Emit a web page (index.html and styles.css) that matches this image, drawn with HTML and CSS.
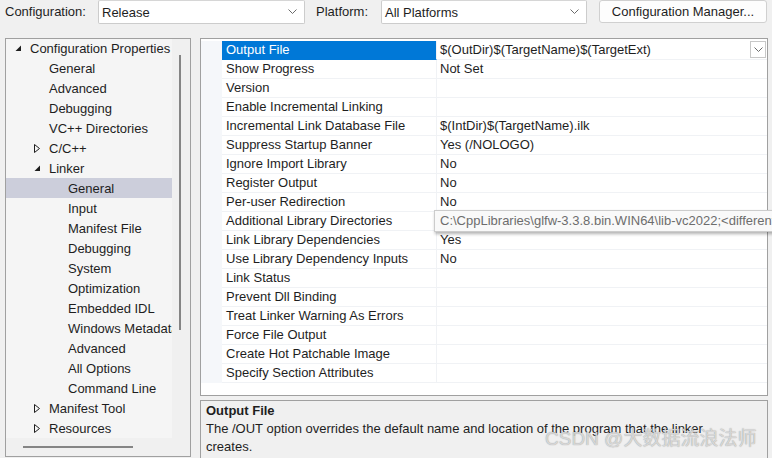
FILE: index.html
```html
<!DOCTYPE html>
<html>
<head>
<meta charset="utf-8">
<link rel="stylesheet" href="styles.css">
</head>
<body>
<div class="top">
  <span class="lbl lbl1">Configuration:</span>
  <div class="combo combo1"><span>Release</span><svg class="chev" width="9" height="6" viewBox="0 0 9 6"><polyline points="0.5,0.5 4.5,4.5 8.5,0.5" fill="none" stroke="#6b6b6b" stroke-width="1"/></svg></div>
  <span class="lbl lbl2">Platform:</span>
  <div class="combo combo2"><span>All Platforms</span><svg class="chev" width="9" height="6" viewBox="0 0 9 6"><polyline points="0.5,0.5 4.5,4.5 8.5,0.5" fill="none" stroke="#6b6b6b" stroke-width="1"/></svg></div>
  <div class="btn">Configuration Manager...</div>
</div>
<div class="main">
  <div class="tree">
    <div class="tree-rows">
      <div class="node l0"><span class="exp"><svg width="7" height="7" viewBox="0 0 7 7"><polygon points="6,0.5 6,6 0.5,6" fill="#1e1e1e"/></svg></span><span class="t">Configuration Properties</span></div>
      <div class="node l1"><span class="exp"></span><span class="t">General</span></div>
      <div class="node l1"><span class="exp"></span><span class="t">Advanced</span></div>
      <div class="node l1"><span class="exp"></span><span class="t">Debugging</span></div>
      <div class="node l1"><span class="exp"></span><span class="t">VC++ Directories</span></div>
      <div class="node l1"><span class="exp"><svg width="7" height="9" viewBox="0 0 7 9"><polygon points="0.5,0.5 5.5,4.5 0.5,8.5" fill="none" stroke="#1e1e1e" stroke-width="1"/></svg></span><span class="t">C/C++</span></div>
      <div class="node l1"><span class="exp"><svg width="7" height="7" viewBox="0 0 7 7"><polygon points="6,0.5 6,6 0.5,6" fill="#1e1e1e"/></svg></span><span class="t">Linker</span></div>
      <div class="node l2 sel"><span class="exp"></span><span class="t">General</span></div>
      <div class="node l2"><span class="exp"></span><span class="t">Input</span></div>
      <div class="node l2"><span class="exp"></span><span class="t">Manifest File</span></div>
      <div class="node l2"><span class="exp"></span><span class="t">Debugging</span></div>
      <div class="node l2"><span class="exp"></span><span class="t">System</span></div>
      <div class="node l2"><span class="exp"></span><span class="t">Optimization</span></div>
      <div class="node l2"><span class="exp"></span><span class="t">Embedded IDL</span></div>
      <div class="node l2"><span class="exp"></span><span class="t">Windows Metadata</span></div>
      <div class="node l2"><span class="exp"></span><span class="t">Advanced</span></div>
      <div class="node l2"><span class="exp"></span><span class="t">All Options</span></div>
      <div class="node l2"><span class="exp"></span><span class="t">Command Line</span></div>
      <div class="node l1"><span class="exp"><svg width="7" height="9" viewBox="0 0 7 9"><polygon points="0.5,0.5 5.5,4.5 0.5,8.5" fill="none" stroke="#1e1e1e" stroke-width="1"/></svg></span><span class="t">Manifest Tool</span></div>
      <div class="node l1"><span class="exp"><svg width="7" height="9" viewBox="0 0 7 9"><polygon points="0.5,0.5 5.5,4.5 0.5,8.5" fill="none" stroke="#1e1e1e" stroke-width="1"/></svg></span><span class="t">Resources</span></div>
    </div>
    <div class="vscroll"><div class="vthumb"></div></div>
    <div class="hscroll"><div class="hthumb"></div></div>
    <div class="corner"></div>
  </div>
  <div class="right">
    <div class="grid">
      <div class="row selrow"><span class="m"></span><span class="n">Output File</span><span class="v">$(OutDir)$(TargetName)$(TargetExt)<span class="ddbtn"><svg width="9" height="6" viewBox="0 0 9 6"><polyline points="0.5,0.5 4.5,4.5 8.5,0.5" fill="none" stroke="#6b6b6b" stroke-width="1"/></svg></span></span></div>
      <div class="row"><span class="m"></span><span class="n">Show Progress</span><span class="v">Not Set</span></div>
      <div class="row"><span class="m"></span><span class="n">Version</span><span class="v"></span></div>
      <div class="row"><span class="m"></span><span class="n">Enable Incremental Linking</span><span class="v"></span></div>
      <div class="row"><span class="m"></span><span class="n">Incremental Link Database File</span><span class="v">$(IntDir)$(TargetName).ilk</span></div>
      <div class="row"><span class="m"></span><span class="n">Suppress Startup Banner</span><span class="v">Yes (/NOLOGO)</span></div>
      <div class="row"><span class="m"></span><span class="n">Ignore Import Library</span><span class="v">No</span></div>
      <div class="row"><span class="m"></span><span class="n">Register Output</span><span class="v">No</span></div>
      <div class="row"><span class="m"></span><span class="n">Per-user Redirection</span><span class="v">No</span></div>
      <div class="row"><span class="m"></span><span class="n">Additional Library Directories</span><span class="v"></span></div>
      <div class="row"><span class="m"></span><span class="n">Link Library Dependencies</span><span class="v">Yes</span></div>
      <div class="row"><span class="m"></span><span class="n">Use Library Dependency Inputs</span><span class="v">No</span></div>
      <div class="row"><span class="m"></span><span class="n">Link Status</span><span class="v"></span></div>
      <div class="row"><span class="m"></span><span class="n">Prevent Dll Binding</span><span class="v"></span></div>
      <div class="row"><span class="m"></span><span class="n">Treat Linker Warning As Errors</span><span class="v"></span></div>
      <div class="row"><span class="m"></span><span class="n">Force File Output</span><span class="v"></span></div>
      <div class="row"><span class="m"></span><span class="n">Create Hot Patchable Image</span><span class="v"></span></div>
      <div class="row"><span class="m"></span><span class="n">Specify Section Attributes</span><span class="v"></span></div>
    </div>
    <div class="desc">
      <div class="dt">Output File</div>
      <div class="dd">The /OUT option overrides the default name and location of the program that the linker creates.</div>
    </div>
  </div>
</div>
<div class="tooltip">C:\CppLibraries\glfw-3.3.8.bin.WIN64\lib-vc2022;&lt;different options&gt;</div>
<div class="watermark">CSDN @大数据流浪法师</div>
</body>
</html>
```
FILE: styles.css
```css
html, body {
  margin: 0;
  padding: 0;
}
body {
  width: 772px;
  height: 458px;
  overflow: hidden;
  background: #f0f0f0;
  font-family: "Liberation Sans", Arial, "Noto Sans CJK SC", sans-serif;
  font-size: 13px;
  color: #1e1e1e;
  position: relative;
}
.top {
  display: flex;
  align-items: center;
  height: 24px;
}
.lbl {
  line-height: 24px;
}
.lbl1 {
  width: 93px;
  padding-left: 5px;
}
.lbl2 {
  width: 65px;
  margin-left: 11px;
}
.combo {
  box-sizing: border-box;
  height: 24px;
  background: #ffffff;
  border: 1px solid #cccccc;
  border-top-color: #d6d6d6;
  border-radius: 2px;
  display: flex;
  align-items: center;
  justify-content: space-between;
  padding: 0 7px 0 3px;
}
.combo1 {
  width: 207px;
}
.combo2 {
  width: 206px;
}
.chev {
  display: block;
}
.btn {
  box-sizing: border-box;
  width: 168px;
  height: 23px;
  margin-left: 12px;
  align-self: flex-start;
  background: #fdfdfd;
  border: 1px solid #d0d0d0;
  border-radius: 3px;
  text-align: center;
  line-height: 21px;
}
.main {
  display: flex;
  margin-top: 14px;
}
.tree {
  box-sizing: border-box;
  width: 186px;
  height: 419px;
  margin-left: 5px;
  border: 1px solid #a0a0a0;
  display: grid;
  grid-template-columns: 166px 18px;
  grid-template-rows: 399px 18px;
  background: #f0f0f0;
}
.tree-rows {
  background: #f5f5f5;
  overflow: hidden;
  white-space: nowrap;
}
.node {
  display: flex;
  align-items: center;
  height: 20px;
  line-height: 19px;
}
.node:first-child {
  height: 19px;
}
.node.l0 { padding-left: 5px; }
.node.l1 { padding-left: 24px; }
.node.l2 { padding-left: 43px; }
.node.sel {
  background: #cccedb;
}
.exp {
  width: 19px;
  flex: none;
  display: flex;
  align-items: center;
  padding-left: 4px;
  box-sizing: border-box;
}
.exp svg {
  display: block;
}
.vscroll {
  background: #f0f0f0;
}
.vthumb {
  width: 2px;
  height: 275px;
  margin-top: 16px;
  margin-left: 7px;
  background: #858585;
}
.hscroll {
  background: #f0f0f0;
}
.hthumb {
  height: 2px;
  width: 110px;
  margin-top: 8px;
  margin-left: 17px;
  background: #858585;
}
.corner {
  background: #f0f0f0;
}
.right {
  margin-left: 9px;
  width: 568px;
  display: flex;
  flex-direction: column;
  gap: 4px;
}
.grid {
  box-sizing: border-box;
  height: 358px;
  border: 1px solid #a0a0a0;
  background: #ffffff;
  padding-top: 2px;
}
.row {
  display: flex;
  height: 19px;
  line-height: 18px;
  white-space: nowrap;
}
.row .m {
  width: 21px;
  flex: none;
  background: #f5f7fa;
}
.row .n {
  box-sizing: border-box;
  width: 215px;
  flex: none;
  padding-left: 4px;
  border-bottom: 1px solid #f0f2f5;
  border-right: 1px solid #f0f2f5;
}
.row .v {
  flex: 1;
  padding-left: 3px;
  border-bottom: 1px solid #f0f2f5;
  position: relative;
}
.selrow .n {
  background: #0078d7;
  color: #ffffff;
  border-bottom-color: #0078d7;
}
.ddbtn {
  position: absolute;
  right: 1px;
  top: 0;
  box-sizing: border-box;
  width: 16px;
  height: 17px;
  background: #ffffff;
  border: 1px solid #c8c8c8;
  display: flex;
  align-items: center;
  justify-content: center;
}
.desc {
  box-sizing: border-box;
  height: 59px;
  border: 1px solid #a0a0a0;
  background: #f0f0f0;
  padding: 1px 5px 0 5px;
  line-height: 18px;
}
.dt {
  font-weight: bold;
}
.dd {
  width: 520px;
}
.tooltip {
  position: absolute;
  left: 434px;
  top: 210px;
  width: 360px;
  height: 22px;
  box-sizing: border-box;
  background: #f9f9f9;
  border: 1px solid #cccccc;
  box-shadow: 1px 2px 3px rgba(0, 0, 0, 0.3);
  color: #6d6d6d;
  line-height: 20px;
  padding-left: 5px;
  white-space: nowrap;
  overflow: hidden;
}
.watermark {
  position: absolute;
  left: 545px;
  top: 423px;
  font-family: "Liberation Sans", "Noto Sans CJK SC", sans-serif;
  font-size: 19px;
  color: rgba(232, 232, 232, 0.8);
  text-shadow: 0 0 1px rgba(110, 110, 110, 0.8);
  white-space: nowrap;
}
```
